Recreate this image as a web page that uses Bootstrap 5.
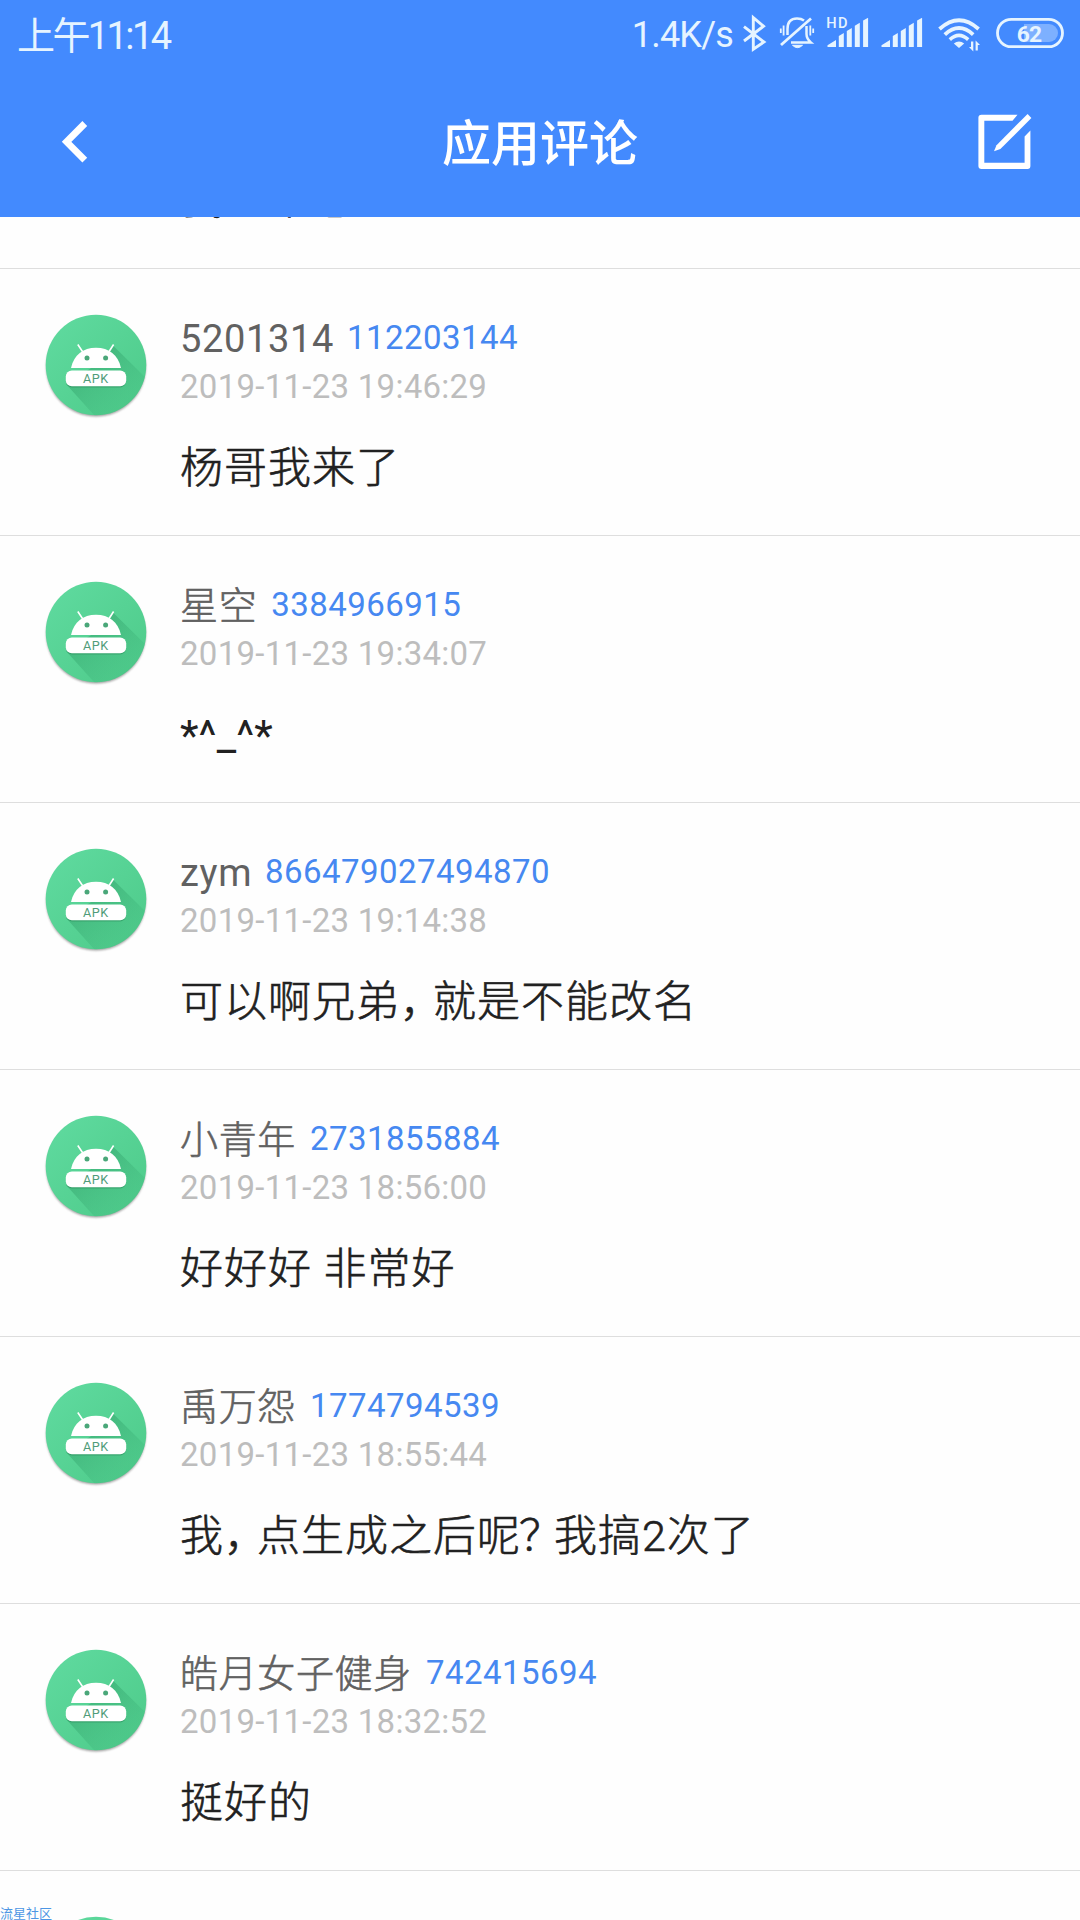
<!DOCTYPE html>
<html lang="zh-CN">
<head>
<meta charset="utf-8">
<meta name="viewport" content="width=device-width, initial-scale=1">
<title>应用评论</title>
<link href="https://cdn.jsdelivr.net/npm/bootstrap@5.3.0/dist/css/bootstrap.min.css" rel="stylesheet">
<style>
body{font-family:Roboto,"Noto Sans CJK SC",sans-serif;background:#fefefe;overflow:hidden}
.app{height:1920px}
.top-bar{background:#438afe;height:217px;z-index:2}
.status{height:68px;padding-left:17px;color:#e6f4ff;line-height:72px;white-space:nowrap}
.clock{font-size:38px;letter-spacing:-2.6px;font-weight:400}
.speed{font-size:36px;letter-spacing:-.8px;line-height:70px}
.status-icons{width:344px;height:68px;margin-left:3px}
.cjk-thin{font-weight:300;-webkit-text-stroke:.6px currentColor}
.title-bar{height:149px;padding:0 42px}
.app-title{font-size:49px;line-height:60px;font-weight:500;padding-top:5px}
.tool{width:76px;height:70px}
.review{height:267px;padding:46px 0 0 46px;border-bottom:1px solid #dedede}
.review-peek{height:52px;padding-left:180px;border-bottom:1px solid #dedede}
.review-peek .said{margin-top:-48px}
.avatar{width:101px;height:106px;overflow:visible}
.review-text{margin-left:33px}
.head-line{height:50px;line-height:50px;margin-top:-1px}
.who{font-size:38px;letter-spacing:.65px;color:#616161}
.who.cjk-thin{margin-right:1px}
.uid{font-size:33px;letter-spacing:.45px;color:#4688f1;margin-left:13px;vertical-align:3px;line-height:1}
.when{font-size:33px;line-height:46px;height:46px;letter-spacing:.27px;color:#bdbdbd}
.said{font-size:43px;height:60px;line-height:60px;letter-spacing:1px;color:#212121;margin-top:28px;white-space:pre}
.said-latin{letter-spacing:.1px;font-weight:400}
.half{display:inline-block;width:33px;white-space:nowrap}
.half-q{text-indent:-2px}
.watermark{left:0;bottom:-5px;font-size:13px;line-height:22px;color:#4d96e4;z-index:3}
</style>
</head>
<body>
<svg width="0" height="0" class="position-absolute">
  <defs>
    <linearGradient id="green" x1="0" y1="0" x2="1" y2="1"><stop offset="0" stop-color="#60dba0"/><stop offset="1" stop-color="#4dca89"/></linearGradient>
    <linearGradient id="shade" gradientUnits="userSpaceOnUse" x1="45" y1="45" x2="80" y2="85"><stop offset="0" stop-color="#2f9d66" stop-opacity=".5"/><stop offset="1" stop-color="#3bb077" stop-opacity=".18"/></linearGradient>
    <filter id="soft" x="-10%" y="-10%" width="120%" height="125%"><feGaussianBlur stdDeviation="1.2"/></filter>
    <clipPath id="disc"><circle cx="50" cy="50" r="50.3"/></clipPath>
    <g id="apk">
      <circle cx="50" cy="51.9" r="49.7" fill="#777" opacity=".7" filter="url(#soft)"/>
      <circle cx="50" cy="50" r="50.3" fill="url(#green)"/>
      <path d="M67.5 31L110 73V120H66L20 69L50 50Z" fill="url(#shade)" clip-path="url(#disc)"/>
      <path d="M31.8 29.5L36.8 37M67.6 29.5L62.8 37" stroke="#fff" stroke-width="1.6"/>
      <path d="M25 53C28 40 37 32.8 50 32.8S72 40 75 53Z" fill="#fff"/>
      <circle cx="41" cy="43" r="2.5" fill="#4aa779"/><circle cx="59.6" cy="43" r="2.5" fill="#4aa779"/>
      <rect x="20" y="57" width="60" height="15.5" rx="6" fill="#278a58" opacity=".5"/>
      <rect x="19.8" y="55.6" width="60.4" height="15.6" rx="6" fill="#fff"/>
      <text x="37" y="67.9" font-family="Roboto" font-size="12.6" letter-spacing=".5" fill="#4f9c79">APK</text>
    </g>
  </defs>
</svg>

<div class="app d-flex flex-column position-relative overflow-hidden">
  <header class="top-bar flex-shrink-0 position-relative">
    <div class="status d-flex justify-content-between">
      <div class="clock">上午11:14</div>
      <div class="d-flex">
        <span class="speed">1.4K/s</span>
        <svg class="status-icons" viewBox="736 0 344 68" fill="none" stroke="#e6f4ff">
          <path d="M744 26.7L764 42L753.3 49.3V17.7L763.5 26.2L744 41" stroke-width="2.9"/>
          <g stroke-width="2.5">
            <path d="M781 45L811 18.5" stroke-width="2.8"/>
            <path d="M787.5 35V29C787.5 22 791 18.5 797 18.5C800 18.5 802 19 804 20.5M806.5 26V34C806.5 38 808 40 811 42.6H791"/>
            <path d="M780.8 28.5V33M783.6 25.5V35.5M810.3 25.5V35.5M813.2 28.5V33" stroke-width="1.8"/>
            <path d="M792.5 45.3H802.5Q797.5 50 792.5 45.3Z" fill="#e6f4ff" stroke-width="1"/>
          </g>
          <g fill="#e6f4ff" stroke="none">
            <text x="826.3" y="27.6" font-family="Roboto" font-size="14.6" font-weight="500" letter-spacing="1.3">HD</text>
            <path d="M827.5 47V45.3L836 40V47ZM838.8 47V36L843.8 33V47ZM846.8 47V31L851.8 28V47ZM854.8 47V25.8L859.8 22.8V47ZM863.1 47V20.6L868.1 17.8V47Z"/>
            <path transform="translate(54 0)" d="M827.5 47V45.3L836 40V47ZM838.8 47V36L843.8 33V47ZM846.8 47V31L851.8 28V47ZM854.8 47V25.8L859.8 22.8V47ZM863.1 47V20.6L868.1 17.8V47Z"/>
            <path d="M953.8 43.5Q959 39.5 964.2 43.5L959 48Z"/>
            <path d="M971 47V41.5H973.3V51.5L969 47ZM975.6 50.5V40.5L980 45H977.8V50.5Z"/>
          </g>
          <path d="M939.5 29Q959 11.5 978.6 29" stroke-width="3.8"/>
          <path d="M944.8 34.6Q959 21.5 973.2 34.6" stroke-width="3.8"/>
          <path d="M949.8 39.6Q959 31 968.2 39.6" stroke-width="3.5"/>
          <path d="M1024 24H1049A9 9 0 0 1 1049 42H1024Z" fill="#7db0ff" stroke="none"/>
          <rect x="997.5" y="19.3" width="65" height="27.4" rx="13.7" stroke-width="2.8"/>
          <text x="1016.8" y="41.7" font-family="Roboto" font-size="22.8" font-weight="700" letter-spacing="-.8" fill="#e6f4ff" stroke="none">62</text>
        </svg>
      </div>
    </div>
    <div class="title-bar d-flex justify-content-between align-items-center">
      <svg class="tool" viewBox="42 107.5 76 70" fill="none"><path d="M84.8 123L66.6 141.3L84.8 159.6" stroke="#fff" stroke-width="6.8"/></svg>
      <h1 class="app-title m-0 text-white">应用评论</h1>
      <svg class="tool" viewBox="962 107.5 76 70" fill="#fff">
        <path d="M1017.5 114.3H981.5Q978.4 114.3 978.4 117.3V165.5Q978.4 168.5 981.5 168.5H1027.5Q1030.4 168.5 1030.4 165.5V130L1024.6 136V162.2H984.3V120.2H1012.5Z"/>
        <path d="M994 150.8L996.5 144.8L1027.6 113.4L1031.4 117.6L1000.4 148.6Z"/>
      </svg>
    </div>
  </header>

  <main>
    <div class="review-peek d-flex"><div class="said cjk-thin">我正中心</div></div>

    <article class="review d-flex">
      <svg class="avatar"><use href="#apk"/></svg>
      <div class="review-text">
        <div class="head-line"><span class="who">5201314</span><span class="uid">112203144</span></div>
        <div class="when">2019-11-23 19:46:29</div>
        <div class="said cjk-thin">杨哥我来了</div>
      </div>
    </article>
    <article class="review d-flex">
      <svg class="avatar"><use href="#apk"/></svg>
      <div class="review-text">
        <div class="head-line"><span class="who cjk-thin">星空</span><span class="uid">3384966915</span></div>
        <div class="when">2019-11-23 19:34:07</div>
        <div class="said said-latin">*^_^*</div>
      </div>
    </article>
    <article class="review d-flex">
      <svg class="avatar"><use href="#apk"/></svg>
      <div class="review-text">
        <div class="head-line"><span class="who">zym</span><span class="uid">866479027494870</span></div>
        <div class="when">2019-11-23 19:14:38</div>
        <div class="said cjk-thin">可以啊兄弟<span class="half">，</span>就是不能改名</div>
      </div>
    </article>
    <article class="review d-flex">
      <svg class="avatar"><use href="#apk"/></svg>
      <div class="review-text">
        <div class="head-line"><span class="who cjk-thin">小青年</span><span class="uid">2731855884</span></div>
        <div class="when">2019-11-23 18:56:00</div>
        <div class="said cjk-thin">好好好 非常好</div>
      </div>
    </article>
    <article class="review d-flex">
      <svg class="avatar"><use href="#apk"/></svg>
      <div class="review-text">
        <div class="head-line"><span class="who cjk-thin">禹万怨</span><span class="uid">1774794539</span></div>
        <div class="when">2019-11-23 18:55:44</div>
        <div class="said cjk-thin">我<span class="half">，</span>点生成之后呢<span class="half half-q">？</span>我搞2次了</div>
      </div>
    </article>
    <article class="review d-flex">
      <svg class="avatar"><use href="#apk"/></svg>
      <div class="review-text">
        <div class="head-line"><span class="who cjk-thin">皓月女子健身</span><span class="uid">742415694</span></div>
        <div class="when">2019-11-23 18:32:52</div>
        <div class="said cjk-thin">挺好的</div>
      </div>
    </article>
    <article class="review d-flex">
      <svg class="avatar"><use href="#apk"/></svg>
    </article>
  </main>
  <div class="watermark position-absolute">流星社区</div>
</div>
<script src="https://cdn.jsdelivr.net/npm/bootstrap@5.3.0/dist/js/bootstrap.bundle.min.js"></script>
</body>
</html>
